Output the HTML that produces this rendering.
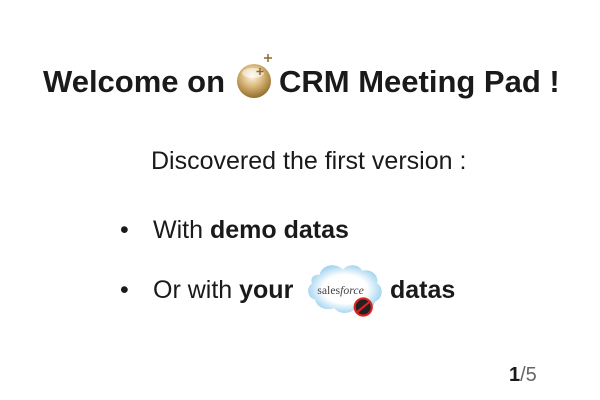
<!DOCTYPE html><html><head><style>
body{margin:0;width:600px;height:400px;background:#fff;font-family:"Liberation Sans",sans-serif;color:#1a1a1a;position:relative;overflow:hidden}
.a{position:absolute;white-space:nowrap}
</style></head><body>
<div class="a" style="left:43px;top:64px;font-size:31px;font-weight:bold">Welcome on</div>
<svg class="a" style="left:234px;top:52px" width="42" height="50" viewBox="0 0 42 50">
<defs><radialGradient id="g" cx="0.45" cy="0.35" r="0.7"><stop offset="0" stop-color="#fff8e8"/><stop offset="0.45" stop-color="#d9b77a"/><stop offset="1" stop-color="#8a6420"/></radialGradient></defs>
<circle cx="20" cy="29" r="17" fill="url(#g)"/>
<ellipse cx="19" cy="21" rx="11" ry="5" fill="#fff" opacity="0.5"/>
<path d="M34 2v8M30 6h8M26 16v7M22.5 19.5h7" stroke="#8a6a30" stroke-width="1.5"/>
</svg>
<div class="a" style="left:279px;top:64px;font-size:31px;font-weight:bold">CRM Meeting Pad !</div>
<div class="a" style="left:151px;top:147px;font-size:25px">Discovered the first version :</div>
<div class="a" style="left:120px;top:216px;font-size:25px">•</div>
<div class="a" style="left:153px;top:216px;font-size:25px">With <b>demo datas</b></div>
<div class="a" style="left:120px;top:276px;font-size:25px">•</div>
<div class="a" style="left:153px;top:276px;font-size:25px">Or with <b>your</b></div>
<svg class="a" style="left:304px;top:260px" width="80" height="62" viewBox="0 0 74 58">
<defs><radialGradient id="c" cx="0.5" cy="0.5" r="0.6"><stop offset="0.5" stop-color="#fff"/><stop offset="1" stop-color="#7ec3ea"/></radialGradient></defs>
<path d="M14 14c2-10 16-12 22-5 5-6 15-5 18 1 8-2 16 4 14 12 6 3 6 14-2 17-2 8-12 10-18 6-5 6-16 6-20 0-8 3-17-1-18-8-7-1-9-11-3-15-2-5 2-9 7-8z" fill="url(#c)"/>
<text x="12" y="32" font-family="Liberation Serif,serif" font-size="11" fill="#444">sales<tspan font-style="italic">force</tspan></text>
<circle cx="55" cy="44" r="8" fill="#222"/><circle cx="55" cy="44" r="8" fill="none" stroke="#d22" stroke-width="2"/><path d="M49 49l12-10" stroke="#d22" stroke-width="2"/>
</svg>
<div class="a" style="left:390px;top:276px;font-size:25px;font-weight:bold">datas</div>
<div class="a" style="left:509px;top:364px;font-size:20px"><b>1</b><span style="color:#666">/5</span></div>
</body></html>
